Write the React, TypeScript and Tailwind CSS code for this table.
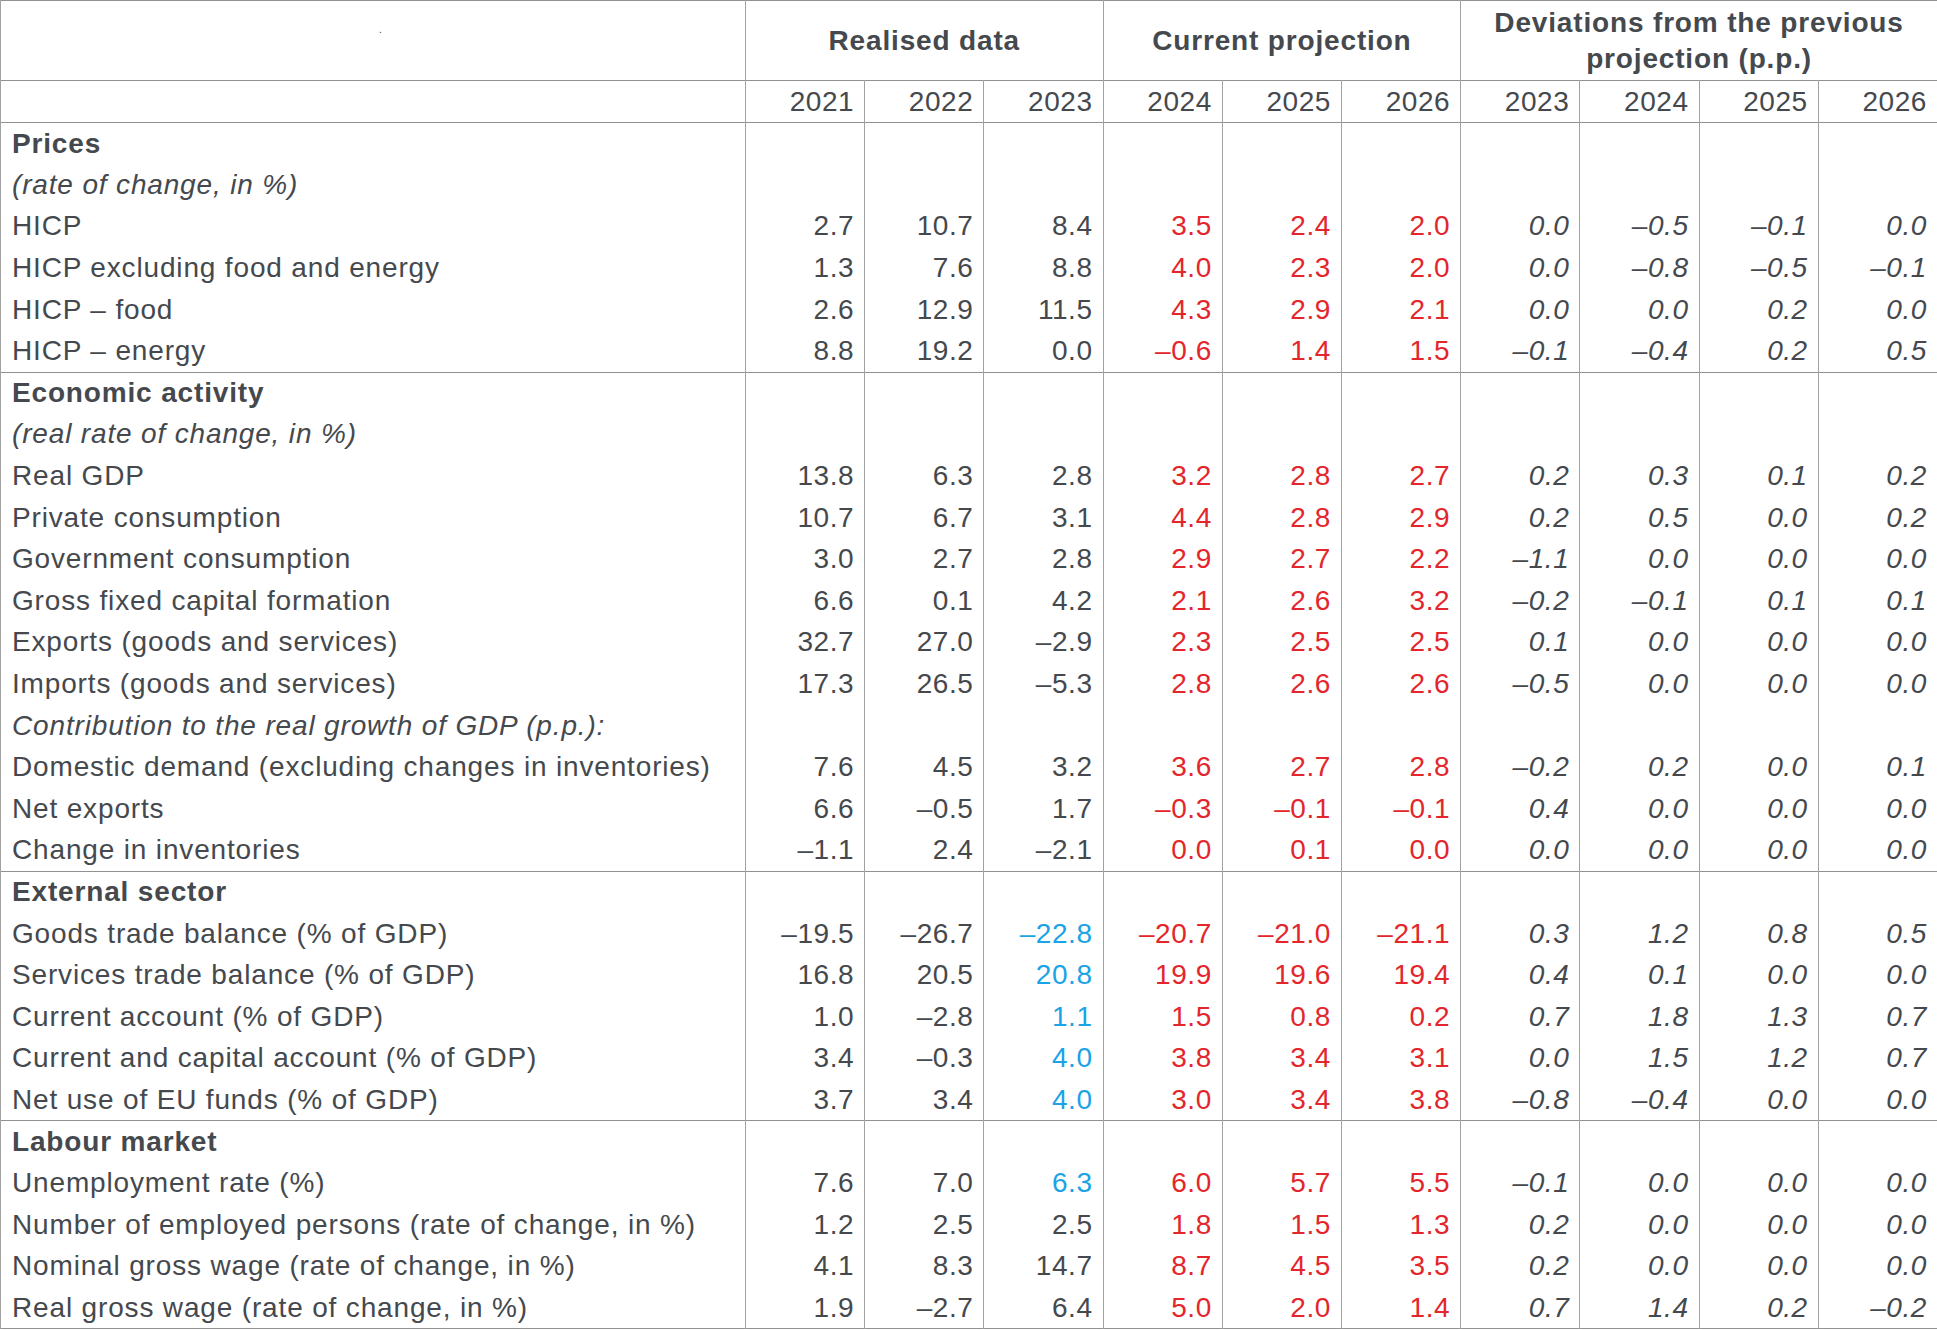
import React from "react";

type Row =
  | { kind: "section"; label: string; first?: boolean }
  | { kind: "note"; label: string }
  | { kind: "data"; label: string; real: string[]; proj: string[]; dev: string[]; blue?: boolean };

const rows: Row[] = [
  { kind: "section", label: "Prices", first: true },
  { kind: "note", label: "(rate of change, in %)" },
  { kind: "data", label: "HICP", real: ["2.7", "10.7", "8.4"], proj: ["3.5", "2.4", "2.0"], dev: ["0.0", "–0.5", "–0.1", "0.0"] },
  { kind: "data", label: "HICP excluding food and energy", real: ["1.3", "7.6", "8.8"], proj: ["4.0", "2.3", "2.0"], dev: ["0.0", "–0.8", "–0.5", "–0.1"] },
  { kind: "data", label: "HICP – food", real: ["2.6", "12.9", "11.5"], proj: ["4.3", "2.9", "2.1"], dev: ["0.0", "0.0", "0.2", "0.0"] },
  { kind: "data", label: "HICP – energy", real: ["8.8", "19.2", "0.0"], proj: ["–0.6", "1.4", "1.5"], dev: ["–0.1", "–0.4", "0.2", "0.5"] },
  { kind: "section", label: "Economic activity" },
  { kind: "note", label: "(real rate of change, in %)" },
  { kind: "data", label: "Real GDP", real: ["13.8", "6.3", "2.8"], proj: ["3.2", "2.8", "2.7"], dev: ["0.2", "0.3", "0.1", "0.2"] },
  { kind: "data", label: "Private consumption", real: ["10.7", "6.7", "3.1"], proj: ["4.4", "2.8", "2.9"], dev: ["0.2", "0.5", "0.0", "0.2"] },
  { kind: "data", label: "Government consumption", real: ["3.0", "2.7", "2.8"], proj: ["2.9", "2.7", "2.2"], dev: ["–1.1", "0.0", "0.0", "0.0"] },
  { kind: "data", label: "Gross fixed capital formation", real: ["6.6", "0.1", "4.2"], proj: ["2.1", "2.6", "3.2"], dev: ["–0.2", "–0.1", "0.1", "0.1"] },
  { kind: "data", label: "Exports (goods and services)", real: ["32.7", "27.0", "–2.9"], proj: ["2.3", "2.5", "2.5"], dev: ["0.1", "0.0", "0.0", "0.0"] },
  { kind: "data", label: "Imports (goods and services)", real: ["17.3", "26.5", "–5.3"], proj: ["2.8", "2.6", "2.6"], dev: ["–0.5", "0.0", "0.0", "0.0"] },
  { kind: "note", label: "Contribution to the real growth of GDP (p.p.):" },
  { kind: "data", label: "Domestic demand (excluding changes in inventories)", real: ["7.6", "4.5", "3.2"], proj: ["3.6", "2.7", "2.8"], dev: ["–0.2", "0.2", "0.0", "0.1"] },
  { kind: "data", label: "Net exports", real: ["6.6", "–0.5", "1.7"], proj: ["–0.3", "–0.1", "–0.1"], dev: ["0.4", "0.0", "0.0", "0.0"] },
  { kind: "data", label: "Change in inventories", real: ["–1.1", "2.4", "–2.1"], proj: ["0.0", "0.1", "0.0"], dev: ["0.0", "0.0", "0.0", "0.0"] },
  { kind: "section", label: "External sector" },
  { kind: "data", label: "Goods trade balance (% of GDP)", real: ["–19.5", "–26.7", "–22.8"], proj: ["–20.7", "–21.0", "–21.1"], dev: ["0.3", "1.2", "0.8", "0.5"], blue: true },
  { kind: "data", label: "Services trade balance (% of GDP)", real: ["16.8", "20.5", "20.8"], proj: ["19.9", "19.6", "19.4"], dev: ["0.4", "0.1", "0.0", "0.0"], blue: true },
  { kind: "data", label: "Current account (% of GDP)", real: ["1.0", "–2.8", "1.1"], proj: ["1.5", "0.8", "0.2"], dev: ["0.7", "1.8", "1.3", "0.7"], blue: true },
  { kind: "data", label: "Current and capital account (% of GDP)", real: ["3.4", "–0.3", "4.0"], proj: ["3.8", "3.4", "3.1"], dev: ["0.0", "1.5", "1.2", "0.7"], blue: true },
  { kind: "data", label: "Net use of EU funds (% of GDP)", real: ["3.7", "3.4", "4.0"], proj: ["3.0", "3.4", "3.8"], dev: ["–0.8", "–0.4", "0.0", "0.0"], blue: true },
  { kind: "section", label: "Labour market" },
  { kind: "data", label: "Unemployment rate (%)", real: ["7.6", "7.0", "6.3"], proj: ["6.0", "5.7", "5.5"], dev: ["–0.1", "0.0", "0.0", "0.0"], blue: true },
  { kind: "data", label: "Number of employed persons (rate of change, in %)", real: ["1.2", "2.5", "2.5"], proj: ["1.8", "1.5", "1.3"], dev: ["0.2", "0.0", "0.0", "0.0"] },
  { kind: "data", label: "Nominal gross wage (rate of change, in %)", real: ["4.1", "8.3", "14.7"], proj: ["8.7", "4.5", "3.5"], dev: ["0.2", "0.0", "0.0", "0.0"] },
  { kind: "data", label: "Real gross wage (rate of change, in %)", real: ["1.9", "–2.7", "6.4"], proj: ["5.0", "2.0", "1.4"], dev: ["0.7", "1.4", "0.2", "–0.2"] },
];

const years = ["2021", "2022", "2023", "2024", "2025", "2026", "2023", "2024", "2025", "2026"];

// numeric cell: right aligned, light vertical rules
const num = "border-x border-[#a3a3a3] p-0 pr-[10px] text-right align-middle leading-[30px] tracking-[0.02em]";
const label = "border-x border-[#a3a3a3] p-0 pl-[11px] align-middle whitespace-nowrap leading-[30px] tracking-[0.03em]";

export default function App() {
  return (
    <div className="w-[1937px] h-[1330px] overflow-hidden bg-white font-['Liberation_Sans',Arial,sans-serif] text-[28px] text-[#45494e]">
      <table className="w-[1937px] table-fixed border-collapse border border-[#8f9295]">
        <colgroup>
          <col className="w-[745px]" />
          {years.map((_, i) => (
            <col key={i} className="w-[119.2px]" />
          ))}
        </colgroup>
        <thead>
          <tr className="h-[80px] border-b border-[#8f9295]">
            <th className="relative border-x border-[#a3a3a3] p-0 font-normal">
              <span className="absolute left-[378px] top-[24px] text-[10px] leading-none">.</span>
            </th>
            <th colSpan={3} className="border-x border-[#a3a3a3] p-0 text-center font-bold leading-[36px] tracking-[0.03em]">
              Realised data
            </th>
            <th colSpan={3} className="border-x border-[#a3a3a3] p-0 text-center font-bold leading-[36px] tracking-[0.03em]">
              Current projection
            </th>
            <th colSpan={4} className="border-x border-[#a3a3a3] px-2 py-0 text-center font-bold leading-[36px] tracking-[0.03em]">
              Deviations from the previous projection (p.p.)
            </th>
          </tr>
          <tr className="h-[42px] border-b border-[#8f9295]">
            <th className="border-x border-[#a3a3a3] p-0" />
            {years.map((y, i) => (
              <th key={i} className={`${num} font-normal`}>
                {y}
              </th>
            ))}
          </tr>
        </thead>
        <tbody>
          {rows.map((r, i) => {
            const top = r.kind === "section" && !r.first ? "border-t border-[#8f9295]" : "";
            if (r.kind === "section" || r.kind === "note") {
              return (
                <tr key={i} className={`h-[41.6px] ${top}`}>
                  <td className={`${label} ${r.kind === "section" ? "font-bold" : "italic"}`}>{r.label}</td>
                  {years.map((_, j) => (
                    <td key={j} className={num} />
                  ))}
                </tr>
              );
            }
            return (
              <tr key={i} className="h-[41.6px]">
                <td className={label}>{r.label}</td>
                {r.real.map((v, j) => (
                  <td key={`r${j}`} className={`${num} ${r.blue && j === 2 ? "text-[#1aa3e6]" : ""}`}>
                    {v}
                  </td>
                ))}
                {r.proj.map((v, j) => (
                  <td key={`p${j}`} className={`${num} text-[#e3262b]`}>
                    {v}
                  </td>
                ))}
                {r.dev.map((v, j) => (
                  <td key={`d${j}`} className={`${num} italic`}>
                    {v}
                  </td>
                ))}
              </tr>
            );
          })}
        </tbody>
      </table>
    </div>
  );
}
